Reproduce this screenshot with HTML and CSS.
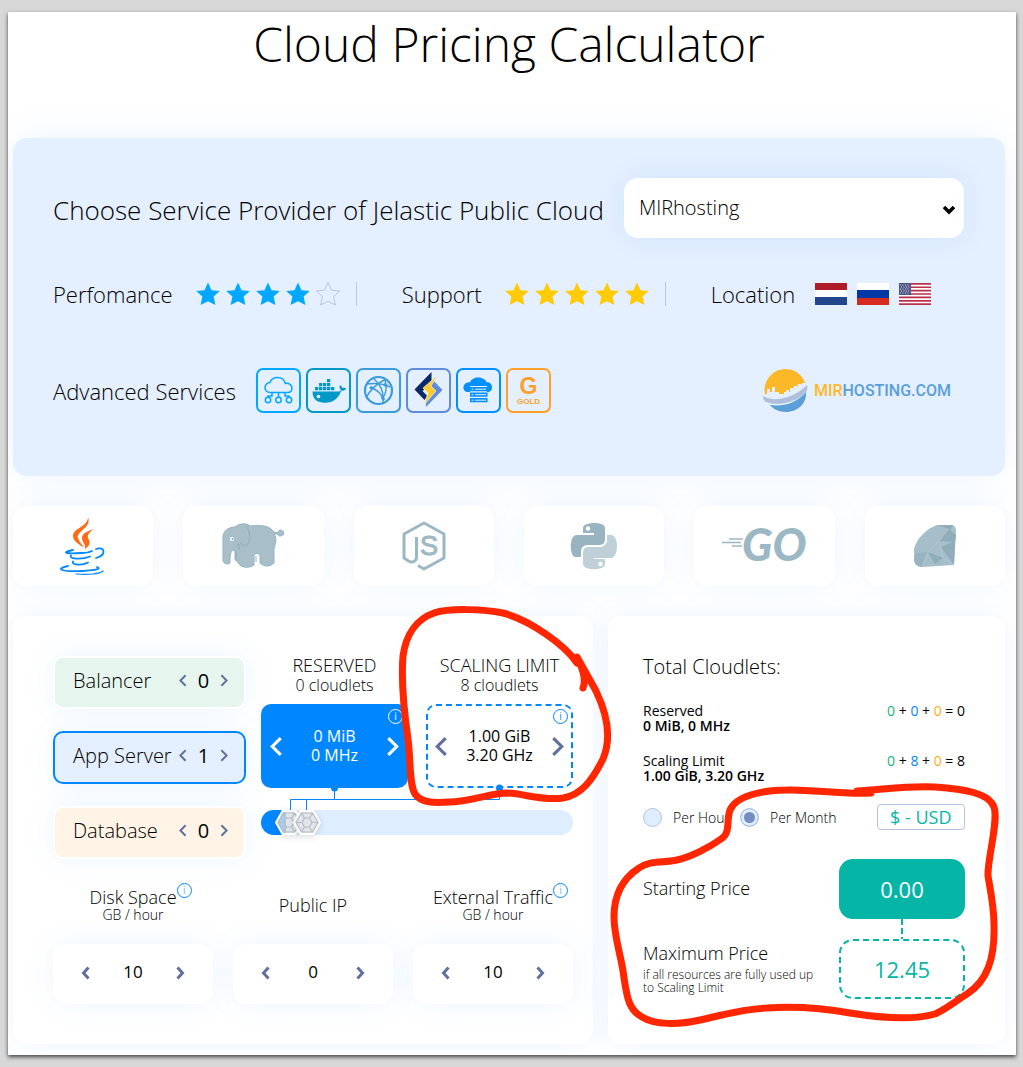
FILE: index.html
```html
<!DOCTYPE html>
<html lang="en">
<head>
<meta charset="utf-8">
<meta name="viewport" content="width=device-width, initial-scale=1">
<title>Cloud Pricing Calculator</title>
<link rel="stylesheet" href="styles.css">
</head>
<body>
<svg class="defs" aria-hidden="true">
  <symbol id="star" viewBox="0 0 24 24"><path d="M12 .5l3.500 7.700 8.300.8-6.200 5.600 1.800 8.400-7.400-3.800L4.600 23l1.800-8.400L.2 9l8.300-.8z"/></symbol>
  <symbol id="left" viewBox="0 0 12 20"><path d="M10 2L2 10l8 8" fill="none" stroke="currentColor" stroke-width="3"/></symbol>
  <symbol id="right" viewBox="0 0 12 20"><path d="M2 2l8 8-8 8" fill="none" stroke="currentColor" stroke-width="3"/></symbol>
  <symbol id="left-bold" viewBox="0 0 9 14"><path d="M7.500 1.500L2.500 7l5 5.500" fill="none" stroke="currentColor" stroke-width="3"/></symbol>
  <symbol id="right-bold" viewBox="0 0 9 14"><path d="M1.500 1.500l5 5.500-5 5.500" fill="none" stroke="currentColor" stroke-width="3"/></symbol>
</svg>
<main class="page">
  <h1 class="title">Cloud Pricing Calculator</h1>

  <section class="provider">
    <div class="provider-row">
      <label class="provider-label" for="provider">Choose Service Provider of Jelastic Public Cloud</label>
      <select class="provider-select" id="provider"><option>MIRhosting</option></select>
    </div>
    <div class="ratings">
      <div class="rating"><span>Perfomance</span>
        <span class="stars blue"><svg><use href="#star"/></svg><svg><use href="#star"/></svg><svg><use href="#star"/></svg><svg><use href="#star"/></svg><svg class="empty"><use href="#star"/></svg></span>
      </div>
      <div class="rating"><span>Support</span>
        <span class="stars gold"><svg><use href="#star"/></svg><svg><use href="#star"/></svg><svg><use href="#star"/></svg><svg><use href="#star"/></svg><svg><use href="#star"/></svg></span>
      </div>
      <div class="location"><span>Location</span>
        <span class="flags">
          <svg viewBox="0 0 32 22"><path fill="#fff" d="M0 0h32v22H0z"/><path fill="#ae1c28" d="M0 0h32v7H0z"/><path fill="#21468b" d="M0 14h32v8H0z"/></svg>
          <svg viewBox="0 0 32 22"><path fill="#fff" d="M0 0h32v22H0z"/><path fill="#0039a6" d="M0 7h32v8H0z"/><path fill="#d52b1e" d="M0 15h32v7H0z"/></svg>
          <svg viewBox="0 0 32 22"><path fill="#fff" d="M0 0h32v22H0z"/><path stroke="#b9304a" stroke-width="1.700" d="M0 .85h32M0 4.230h32M0 7.600h32M0 11h32M0 14.400h32M0 17.800h32M0 21.150h32"/><path fill="#4c5583" d="M0 0h12v12H0z"/><path stroke="#dfe2ee" stroke-width="1" stroke-dasharray="1 1.500" d="M1 2h10M2 4h10M1 6h10M2 8h10M1 10h10"/></svg>
        </span>
      </div>
    </div>
    <div class="services">
      <span>Advanced Services</span>
      <div class="service-list">
        <span class="service cloud"><svg viewBox="0 0 41 41" fill="none" stroke="#00a8ff" stroke-width="1.500"><path d="M12.500 22.500c-3.500 0-5.500-2.300-5.500-5 0-2.800 2.300-5 5-5 1-3 4-5 7.500-5 4 0 7 2.500 7.800 6 3.700-.7 6.700 1.500 6.700 4.700 0 2.500-1.800 4.300-4.500 4.300zM14 22.500v3.500h-4v2M20.500 22.500v5M27 22.500v3.500h4v2"/><circle cx="10" cy="30" r="2.700"/><circle cx="20.500" cy="30" r="2.700"/><circle cx="31" cy="30" r="2.700"/></svg></span>
        <span class="service docker"><svg viewBox="0 0 41 41" fill="#0299c8"><path d="M4.500 21.500h26c1.500 0 2.300-.6 2.500-1.700-1.500-1-2-3-1-4.800 1.300.8 2 1.800 2.200 3 1.500-.5 3-.4 4 .3-1 2-2.700 2.700-5 2.500-2.500 7.500-8 12-16 12-8.500 0-12.700-4-12.700-11.300z"/><path d="M7 17h3.300v3.300H7zM11 17h3.300v3.300H11zM15 17h3.300v3.300H15zM19 17h3.300v3.300H19zM23 17h3.300v3.300H23zM11 13h3.300v3.300H11zM15 13h3.300v3.300H15zM19 13h3.300v3.300H19zM19 9h3.300v3.300H19z"/><circle cx="10.500" cy="26.500" r="1.800" fill="#e4efff"/></svg></span>
        <span class="service network"><svg viewBox="0 0 41 41" fill="none" stroke="#3b9bdc" stroke-width="1.400"><circle cx="20.500" cy="20.500" r="13.500" stroke-width="2.200"/><path d="M9 14c8-1 15-1 23 3M15 8c7 6 11 12 10 25M28 9C20 13 12 20 8 28M14 18c5 2 9 6 11 10M27 10c2 7 2 12-2 18"/><path d="M26 14.500l3 1M12 17l3 2M24 27l2 3" stroke-width="3"/></svg></span>
        <span class="service speed"><svg viewBox="0 0 41 41"><path fill="#0a2a66" d="M23.500 2v11l-9 8 5 5-3 4L6.500 19.500z"/><path fill="#5f8ddb" d="M18 37V27l7-7-4-5 4-5 9.500 10z"/><path fill="#ffcb2f" stroke="#e4efff" stroke-width=".7" d="M30 5L15 18l5 5-4 12 12-14-5-5z"/></svg></span>
        <span class="service storage"><svg viewBox="0 0 41 41" fill="#0090ff"><path d="M12 22H8.500c-4-1-4.500-8 1-9.500 1-.3 1.800-.3 2.500-.1C14 6 26 6 28.500 12.200c6-.8 8 8 2 10L29 22v-6H12z"/><path d="M12 17h17.500v4.300H12zM12 22.500h17.500v4.300H12zM12 28h17.500v4.300H12z"/><path stroke="#e4efff" d="M13.500 19.200h2M17 19.200h11M13.500 24.700h2M17 24.700h11M13.500 30.200h2M17 30.200h11"/></svg></span>
        <span class="service gold-plan"><svg viewBox="0 0 41 41"><text x="20.500" y="24" text-anchor="middle" class="gold-letter">G</text><text x="20.500" y="34" text-anchor="middle" class="gold-word">GOLD</text></svg></span>
      </div>
      <a class="brand" href="#mirhosting">
        <svg viewBox="0 0 45 45" width="45" height="45"><circle cx="22.500" cy="22" r="21" fill="#fdb827"/><path fill="#e4efff" d="M0 27l4-1v-5h3v3h2v-5h3v5h4v2h5v-2h2v-2h3v2h1v-4h3v2l1-4h3v2l1-4h3v2l1-3h4l2 9C39 40 15 44 0 33z"/><path fill="#5b9fd9" d="M7 37c13 2 27-2 36-13 1 11-8 20-20 20C16 44 10 41 7 37z"/><path fill="#aebfdc" d="M0 28c9 6 29 4 44-11 1 3 0 5-1 7C32 36 13 38 3 34c-2-1-3-3-3-6z"/></svg>
        <span><span class="brand-mir">MIR</span>HOSTING.COM</span>
      </a>
    </div>
  </section>

  <section class="languages" aria-label="Language">
    <button class="card" aria-label="Java"><svg viewBox="0 0 50 60" width="50" height="60" fill="none" stroke-linecap="round"><path fill="#ff6a13" d="M30 1c4 11-12 14-10 21 1 4 4 6 6 10-5-4-11-7-11-12C15 12 30 11 30 1zM36 13c-4 3-7 5-6 9 2 4 3 7-3 11 1-5-3-7-3-11 0-5 6-7 12-9z"/><g stroke="#0288ff" stroke-width="1.800"><path d="M15 34c-14 3-5 4 8 3 5 0 9-1 11-2M38 33c9-3 11 6 0 9M13 39.500c-3 4 12 4 19 1M15 45.500c-2 4 10 4 15 1M10 50c-14 3-6 6 14 5 14-1 20-2 15-4"/><path stroke-width="1.200" d="M18 58c12 1 24 0 27-3"/></g></svg></button>
    <button class="card" aria-label="PHP"><svg viewBox="0 0 62 46" width="62" height="46"><path fill="#a8bfca" stroke="#94b2bf" d="M1 38V14C1 7 8 4 13 4c5-4 12-4 15-1 10-1 19-1 24 6l4 1c0-3 3-4 4-2 3-1 3 5 0 4-1 2-4 1-5-1h-3c3 4 2 9 0 14v15c-4 4-10 4-14 0v-8c-2-2-4-2-6 0v10c-4 3-11 3-14 0l-5-6V28c-4-3-5 3-5 12-2 2-6 1-7-2z"/><path fill="none" stroke="#8eaebb" d="M24 3c4 4 4 10 3 15-1 5-5 6-9 2M15 22l2-1v6M14 28v10M34 33v6"/><circle cx="10" cy="16" r="2" fill="#fff"/><circle cx="10.500" cy="16" r="1" fill="#8eaebb"/></svg></button>
    <button class="card" aria-label="Node.js"><svg viewBox="0 0 44 50" width="44" height="50"><path fill="none" stroke="#9cb8c4" stroke-width="3" stroke-linejoin="round" d="M14.500 16v20c0 5-5 6-8 4L2 37V13L22 2l20 11v24L22 48l-6-3.500"/><text x="18" y="34" class="node-letter">S</text></svg></button>
    <button class="card" aria-label="Python"><svg viewBox="0 0 48 48" width="48" height="48"><path fill="#98b4c1" d="M13 11V6c0-6 22-7 22 0v11c0 5-3 6-7 6H18c-5 0-7 3-7 7v5H6C-1 35-1 14 6 13h18v-2z"/><path fill="#bfd0d9" d="M37 13h4c8 0 8 22 0 23H24v1h11v5c0 7-22 7-22 0V31c0-4 2-6 6-6h11c4 0 7-3 7-7z"/><circle cx="18" cy="6.500" r="2.200" fill="#fff"/><circle cx="30.500" cy="42" r="2.200" fill="#fff"/></svg></button>
    <button class="card" aria-label="Go"><svg viewBox="0 0 84 56" width="84" height="56"><path stroke="#9cb8c4" stroke-width="1.600" d="M7 21h14M0 24.500h19M10 28h10"/><text x="20" y="43" class="go-word">GO</text></svg></button>
    <button class="card" aria-label="Ruby"><svg viewBox="0 0 42 42" width="42" height="42"><path fill="#a6bec9" d="M23 0h14c4 0 5 3 5 7l-2 33-32 2c-5 0-8-4-8-8V24C3 12 14 3 23 0z"/><path fill="#90adba" d="M23 0h16l-3 5 6 5-1 7-16-1 10-12zM14 27l15 6-8 6zM27 22l14-6-1 24z"/><path fill="#98b4c1" d="M2 28l12-1-6 15c-5 0-8-4-8-8z"/><path fill="none" stroke="#b5cad3" stroke-width=".7" d="M35 4L25 16 14 27 8 42M25 16l4 17 11 7"/></svg></button>
  </section>

  <div class="calculator">
    <section class="panel config">
      <div class="top">
        <div class="nodes">
          <div class="node balancer"><span class="node-name">Balancer</span><button aria-label="Fewer balancers"><svg><use href="#left"/></svg></button><output>0</output><button aria-label="More balancers"><svg><use href="#right"/></svg></button></div>
          <div class="node app"><span class="node-name">App Server</span><button aria-label="Fewer app servers"><svg><use href="#left"/></svg></button><output>1</output><button aria-label="More app servers"><svg><use href="#right"/></svg></button></div>
          <div class="node database"><span class="node-name">Database</span><button aria-label="Fewer databases"><svg><use href="#left"/></svg></button><output>0</output><button aria-label="More databases"><svg><use href="#right"/></svg></button></div>
        </div>
        <div class="scaling">
          <div class="limits">
            <div class="limit">
              <h2 class="limit-title">RESERVED</h2><p class="limit-sub">0 cloudlets</p>
              <div class="limit-box reserved"><button aria-label="Less reserved"><svg><use href="#left"/></svg></button><span>0 MiB<br>0 MHz</span><button aria-label="More reserved"><svg><use href="#right"/></svg></button><button class="info" aria-label="About reserved">i</button></div>
            </div>
            <div class="limit">
              <h2 class="limit-title">SCALING LIMIT</h2><p class="limit-sub">8 cloudlets</p>
              <div class="limit-box maximum"><button aria-label="Lower limit"><svg><use href="#left"/></svg></button><span>1.00 GiB<br>3.20 GHz</span><button aria-label="Higher limit"><svg><use href="#right"/></svg></button><button class="info" aria-label="About scaling limit">i</button></div>
              <svg class="marker marker-limit" viewBox="390 600 250 260" aria-hidden="true"><path d="M583 688C587 678 581 666 577 657C585 671 591 682 596 691C609 718 611 740 603 759C592 781 581 795 563 798C541 801 523 793 505 793C488 794 469 802 449 802C434 803 421 803 415 794C409 784 411 762 408 739C403 704 401 680 403 656C406 634 417 619 434 613C449 608 484 609 503 613C530 620 565 645 577 663"/></svg>
            </div>
          </div>
          <svg class="links" viewBox="0 0 312 22" preserveAspectRatio="none" aria-hidden="true"><path fill="none" stroke="#0087ff" d="M73.500 0v11.500M29.500 22V11.500h209V5M45.500 22V11.500"/><path fill="#0087ff" d="M70 0h7a3.500 3.500 0 0 1-7 0z"/><circle cx="238.500" cy="0" r="3.500" fill="#0087ff"/></svg>
          <div class="slider">
            <input type="range" min="0" max="284" value="14" aria-label="Reserved cloudlets">
            <input type="range" min="0" max="284" value="32" aria-label="Scaling limit cloudlets">
          </div>
        </div>
      </div>
      <div class="extras">
        <div class="extra"><div class="extra-label"><span>Disk Space<button class="info raised" aria-label="About disk space">i</button></span><small>GB / hour</small></div><div class="stepper"><button aria-label="Less disk"><svg><use href="#left-bold"/></svg></button><output>10</output><button aria-label="More disk"><svg><use href="#right-bold"/></svg></button></div></div>
        <div class="extra"><div class="extra-label"><span>Public IP</span></div><div class="stepper"><button aria-label="Fewer addresses"><svg><use href="#left-bold"/></svg></button><output>0</output><button aria-label="More addresses"><svg><use href="#right-bold"/></svg></button></div></div>
        <div class="extra"><div class="extra-label"><span>External Traffic<button class="info raised" aria-label="About external traffic">i</button></span><small>GB / hour</small></div><div class="stepper"><button aria-label="Less traffic"><svg><use href="#left-bold"/></svg></button><output>10</output><button aria-label="More traffic"><svg><use href="#right-bold"/></svg></button></div></div>
      </div>
    </section>

    <section class="panel totals">
      <h2 class="totals-title">Total Cloudlets:</h2>
      <div class="total"><p>Reserved<br><strong>0 MiB, 0 MHz</strong></p><p><span class="n1">0</span> + <span class="n2">0</span> + <span class="n3">0</span> = 0</p></div>
      <div class="total"><p>Scaling Limit<br><strong>1.00 GiB, 3.20 GHz</strong></p><p><span class="n1">0</span> + <span class="n2">8</span> + <span class="n3">0</span> = 8</p></div>
      <div class="billing">
        <label class="period"><input type="radio" name="period">Per Hour</label>
        <label class="period"><input type="radio" name="period" checked>Per Month</label>
        <select class="currency" aria-label="Currency"><option>$ - USD</option></select>
      </div>
      <div class="price"><p class="price-name">Starting Price</p><output class="amount start">0.00</output></div>
      <div class="joint"></div>
      <div class="price"><p class="price-name">Maximum Price<small>if all resources are fully used up to Scaling Limit</small></p><output class="amount most">12.45</output></div>
      <svg class="marker marker-price" viewBox="600 780 423 260" aria-hidden="true"><path d="M871 793C845 795 810 789 787 790C762 790 736 796 730 810C726 821 731 833 721 839C710 847 691 857 677 860C663 863 650 860 639 868C622 879 614 896 614 917C614 938 622 958 624 978C627 998 629 1010 642 1017C655 1025 678 1025 700 1020C724 1015 740 1009 767 1008C800 1006 828 1009 850 1013C875 1017 911 1021 935 1014C948 1008 957 1000 967 994C987 981 995 959 994 925C994 906 990 888 988 876C987 860 999 820 994 807C989 793 964 789 935 787C911 785 880 790 857 791"/></svg>
    </section>
  </div>
</main>
</body>
</html>
```
FILE: styles.css
```css
* { box-sizing: border-box; }
body {
  margin: 0;
  padding: 12px 7px 12px 8px;
  background: #d8d8d8;
  color: #000;
  font-family: "Open Sans", sans-serif;
  font-weight: 300;
}
h1, h2, p { margin: 0; font-weight: inherit; }
button { padding: 0; border: 0; background: none; color: #60709d; font: inherit; cursor: pointer; }
.defs { position: absolute; width: 0; height: 0; }
.page {
  padding: 0 11px 11px 5px;
  background: #fff;
  box-shadow: 0 2px 4px #444;
  overflow: hidden;
}
.title { margin-bottom: 62px; font-size: 48px; line-height: 64px; text-align: center; }

.provider {
  padding: 40px 40px 63px;
  border-radius: 14px;
  background: #e4efff;
  box-shadow: 0 0 40px rgba(0, 135, 255, .08);
  font-size: 22px;
}
.provider-row { display: flex; align-items: center; gap: 20px; }
.provider-label { padding-top: 3px; font-size: 26px; white-space: nowrap; }
.provider-select {
  flex: 0 1 340px;
  height: 60px;
  padding: 0 15px 2px;
  border: 0;
  border-radius: 14px;
  appearance: none;
  background: #fff url("data:image/svg+xml,%3Csvg xmlns='http://www.w3.org/2000/svg' width='14' height='10'%3E%3Cpath d='M2 2l5 5 5-5' fill='none' stroke='black' stroke-width='3.500'/%3E%3C/svg%3E") no-repeat right 8px top 27px;
  box-shadow: 0 0 30px rgba(0, 135, 255, .08);
  color: #000;
  font: 300 20px "Open Sans", sans-serif;
}
.ratings { display: flex; align-items: center; height: 30px; margin-top: 41px; }
.rating { display: flex; align-items: center; gap: 23px; height: 24px; margin-right: 45px; padding-right: 16px; border-right: 1px solid #b9c6dc; }
.stars { display: flex; gap: 6px; }
.stars svg { width: 24px; height: 24px; }
.blue { fill: #00a8ff; }
.gold { fill: #ffcb05; }
.stars .empty { fill: none; stroke: #b9c6dc; }
.location { display: flex; align-items: center; gap: 20px; }
.flags { display: flex; gap: 10px; }
.flags svg { width: 32px; height: 22px; }
.services { display: flex; align-items: center; gap: 20px; margin-top: 59px; }
.service-list { display: flex; gap: 5px; }
.service { display: flex; width: 45px; height: 45px; border: 2px solid; border-radius: 7px; }
.service svg { width: 41px; height: 41px; }
.cloud { border-color: #00a8ff; }
.docker { border-color: #0299c8; }
.network { border-color: #3b9bdc; }
.speed { border-color: #5f8ddb; }
.storage { border-color: #0090ff; }
.gold-plan { border-color: #ff9f2c; fill: #ff9f2c; font-family: "Liberation Sans", sans-serif; font-weight: 700; }
.gold-letter { font-size: 23px; }
.gold-word { font-size: 8px; }
.brand { display: flex; align-items: center; gap: 6px; margin: 0 14px 0 auto; color: #5b9fd9; font: 500 16px Roboto, sans-serif; text-decoration: none; }
.brand-mir { color: #fdb827; }

.languages { display: grid; grid-template-columns: repeat(6, 1fr); gap: 30px; margin: 30px 0; }
.card { display: flex; align-items: center; justify-content: center; height: 80px; border-radius: 14px; background: #fff; box-shadow: 0 0 30px rgba(0, 135, 255, .08); }
.node-letter { fill: #9cb8c4; font: 400 27px "Liberation Sans", sans-serif; stroke: #9cb8c4; }
.go-word { fill: #9cb8c4; font: italic 900 45px Lato, sans-serif; }

.calculator { display: grid; grid-template-columns: 580fr 397fr; gap: 15px; }
.panel { position: relative; border-radius: 14px; background: #fff; box-shadow: 0 0 30px rgba(0, 135, 255, .08); }
.config { padding: 40px 20px 40px 40px; }
.top { display: grid; grid-template-columns: 193fr 312fr; gap: 15px; }
.nodes { display: grid; align-content: start; gap: 22px; }
.node {
  display: flex;
  align-items: center;
  height: 53px;
  padding: 0 16px 4px 18px;
  border: 2px solid #fff;
  border-radius: 10px;
  box-shadow: 0 0 30px rgba(0, 135, 255, .08);
  font-size: 20px;
}
.node-name { flex: 1; white-space: nowrap; }
.node button { display: flex; }
.node svg { width: 8px; height: 13px; }
.node output { width: 33px; font-size: 20px; font-weight: 400; text-align: center; }
.balancer { background: #e6f6ee; }
.app { border-color: #0087ff; background: #e4efff; }
.database { background: #fff4e5; }

.limits { display: grid; grid-template-columns: 1fr 1fr; gap: 18px; }
.limit { position: relative; text-align: center; }
.limit-title { font-size: 18px; line-height: 19px; white-space: nowrap; }
.limit-sub { margin-bottom: 9px; font-size: 16px; line-height: 20px; }
.limit-box { position: relative; display: flex; align-items: center; justify-content: space-between; height: 84px; padding: 0 9px; border-radius: 10px; font-size: 16px; font-weight: 400; line-height: 19px; }
.limit-box svg { display: block; width: 13px; height: 21px; }
.reserved { background: #0087ff; color: #fff; }
.reserved button { color: #fff; }
.maximum { padding: 0 7px; border: 2px dashed #0087ff; }
.limit-box .info { position: absolute; top: 5px; right: 5px; }
.maximum .info { top: 3px; right: 3px; }
.info { width: 15px; height: 15px; border: 1px solid #0087ff; border-radius: 50%; color: #0087ff; font-size: 10px; line-height: 13px; text-align: center; }
.reserved .info { border-color: #fff; }
.links { display: block; width: 100%; height: 22px; overflow: visible; }
.slider { position: relative; height: 25px; border-radius: 13px; background: linear-gradient(90deg, #0087ff 8%, #deedff 8%); }
.slider input { position: absolute; inset: 0; width: 100%; height: 25px; margin: 0; appearance: none; background: none; pointer-events: none; }
.slider input::-webkit-slider-thumb {
  width: 28px;
  height: 25px;
  border: 0;
  appearance: none;
  pointer-events: auto;
  background: url("data:image/svg+xml,%3Csvg xmlns='http://www.w3.org/2000/svg' viewBox='0 0 28 25'%3E%3Cpath d='M7.500 1h13L27 12.500 20.500 24h-13L1 12.500z' fill='%23eee' fill-opacity='.7' stroke='white' stroke-width='2'/%3E%3Cpath d='M8.500 3h11L25 12.500 19.500 22h-11L3 12.500zM8.500 3l3 5M19.500 3l-3 5M25 12.500h-6M19.500 22l-3-5M8.500 22l3-5M3 12.500h6M11.500 8h5l2.500 4.500-2.500 4.500h-5L9 12.500z' fill='none' stroke='%23b8bcc2' stroke-width='1.200'/%3E%3C/svg%3E");
  filter: drop-shadow(0 2px 3px rgba(60, 70, 90, .2));
}

.extras { display: grid; grid-template-columns: repeat(3, 1fr); gap: 20px; margin-top: 27px; }
.extra-label { display: flex; flex-direction: column; justify-content: center; height: 37px; margin-bottom: 21px; font-size: 18px; line-height: 20px; text-align: center; white-space: nowrap; }
.extra-label small { padding-top: 1px; font-size: 14px; line-height: 14px; }
.extra-label span { height: 20px; }
.raised { position: relative; top: -10px; margin-right: -15px; vertical-align: baseline; }
.stepper { display: flex; align-items: center; justify-content: center; height: 60px; padding-bottom: 2px; border-radius: 14px; background: #fff; box-shadow: 0 0 30px rgba(0, 135, 255, .08); font-size: 17px; font-weight: 400; }
.stepper output { width: 86px; padding-bottom: 3px; text-align: center; }
.stepper button { display: flex; }
.stepper svg { width: 9px; height: 14px; }

.totals { padding: 41px 40px 40px 35px; }
.totals-title { margin-bottom: 25px; font-size: 20px; line-height: 20px; }
.total { display: flex; justify-content: space-between; height: 50px; padding-top: 1px; font-size: 14px; font-weight: 400; line-height: 15px; }
.total strong { font-weight: 600; }
.n1 { color: #19b37d; }
.n2 { color: #0087ff; }
.n3 { color: #ffac1c; }
.billing { display: flex; align-items: center; gap: 10px; height: 26px; margin: 2px 0 29px; }
.period { display: flex; align-items: center; gap: 11px; font-size: 14px; white-space: nowrap; }
.period input { width: 19px; height: 19px; margin: 0; border: 1px solid #b3c3e2; border-radius: 50%; appearance: none; background: #deedff; }
.period input:checked { background: #748dbe; box-shadow: inset 0 0 0 3px #deedff; }
.currency { width: 88px; height: 26px; margin-left: auto; padding: 0 12px; border: 1px solid #b3c3e2; border-radius: 4px; appearance: none; background: #fff; color: #05b5a6; font: 400 18px/22px "Open Sans", sans-serif; }
.price { display: flex; align-items: center; justify-content: space-between; height: 60px; }
.price-name { width: 180px; padding-bottom: 3px; font-size: 18px; line-height: 24px; }
.price-name small { display: block; margin-top: 3px; font-size: 12px; line-height: 13px; }
.amount { display: grid; place-items: center; width: 126px; height: 60px; border-radius: 14px; font-size: 22px; font-weight: 400; }
.start { background: #05b5a6; color: #fff; }
.most { border: 2px dashed #05b5a6; color: #05b5a6; }
.joint { width: 2px; height: 20px; margin: 0 62px 0 auto; background: repeating-linear-gradient(#05b5a6 0 6px, transparent 6px 9px); }

.marker { position: absolute; z-index: 2; fill: none; stroke: #ff2600; stroke-width: 7; stroke-linecap: round; stroke-linejoin: round; pointer-events: none; }
.marker-limit { left: -36px; top: -56px; width: 250px; height: 260px; }
.marker-price { left: -8px; top: 164px; width: 423px; height: 260px; }
```
